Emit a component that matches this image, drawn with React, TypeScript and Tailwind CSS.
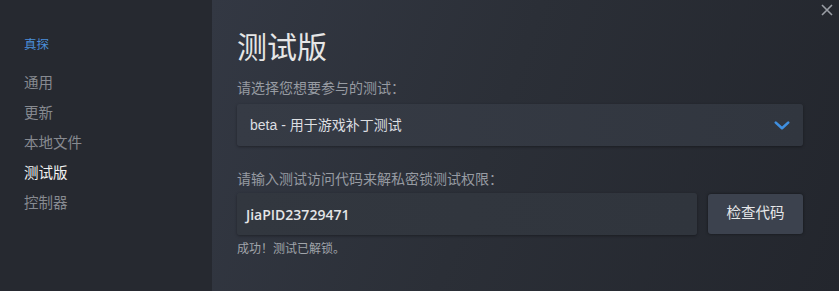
const navItems = [
  { label: "通用", active: false },
  { label: "更新", active: false },
  { label: "本地文件", active: false },
  { label: "测试版", active: true },
  { label: "控制器", active: false },
];

export default function App() {
  return (
    <div className="relative flex h-[291px] w-[839px] overflow-hidden bg-[#23262d] font-['Liberation_Sans','Noto_Sans_CJK_SC',sans-serif]">
      {/* 侧边栏 */}
      <aside className="w-[212px] shrink-0 bg-[#262930] pl-[24px] pt-[36px]">
        <div className="text-[12.5px] leading-[18px] text-[#4b8fdb]">真探</div>
        <nav className="mt-[14px] flex flex-col">
          {navItems.map((item) => (
            <div
              key={item.label}
              className={
                item.active
                  ? "text-[14.5px] leading-[30px] text-[#f2f2f2]"
                  : "text-[14.5px] leading-[30px] text-[#878a90]"
              }
            >
              {item.label}
            </div>
          ))}
        </nav>
      </aside>

      {/* 内容区 */}
      <main className="flex flex-1 flex-col bg-[linear-gradient(110deg,#333843_0%,#2b2f37_45%,#23262d_100%)] pl-[25px] pr-[36px] pt-[30px]">
        <h1 className="text-[30px] leading-[36px] text-[#e6e6e6]">测试版</h1>

        <div className="mt-[12px] text-[14px] leading-[20px] text-[#979ba2]">
          请选择您想要参与的测试：
        </div>
        <div className="mt-[6px] flex h-[42px] items-center justify-between rounded-[3px] bg-[linear-gradient(90deg,#363b45,#31363f)] pl-[13px] pr-[12px] shadow-[0_1px_3px_rgba(0,0,0,0.35)]">
          <span className="text-[14px] text-[#dcdee1]">beta - 用于游戏补丁测试</span>
          <svg className="mr-[1px] h-[9px] w-[16px]" viewBox="0 0 16 9" fill="none" stroke="#3f8fe0" strokeWidth="2.6" strokeLinecap="round" strokeLinejoin="round">
            <path d="M1.8 1.6 L8 7.2 L14.2 1.6" />
          </svg>
        </div>

        <div className="mt-[23px] text-[14px] leading-[20px] text-[#979ba2]">
          请输入测试访问代码来解私密锁测试权限：
        </div>
        <div className="mt-[4px] flex items-center gap-[11px]">
          <div className="flex h-[42px] flex-1 items-center rounded-[3px] bg-[linear-gradient(90deg,#32373f,#30353d)] pl-[9px] shadow-[0_1px_3px_rgba(0,0,0,0.35)]">
            <span className="font-['Open_Sans',sans-serif] text-[14px] font-semibold text-[#e4e5e7]">JiaPID23729471</span>
          </div>
          <button className="flex h-[40px] w-[95px] items-center justify-center rounded-[3px] bg-[#3c424e] text-[14.5px] text-[#e6e7e9] shadow-[0_0_3px_rgba(0,0,0,0.5)]">
            检查代码
          </button>
        </div>

        <div className="mt-[5px] text-[12px] leading-[18px] text-[#a0a4aa]">成功！测试已解锁。</div>
      </main>

      {/* 关闭按钮 */}
      <svg
        className="absolute right-[6px] top-[4px] h-[12px] w-[12px]"
        viewBox="0 0 12 12"
        fill="none"
        stroke="#9a9ea5"
        strokeWidth="1.6"
      >
        <path d="M1 1 L11 11 M11 1 L1 11" />
      </svg>
    </div>
  );
}
